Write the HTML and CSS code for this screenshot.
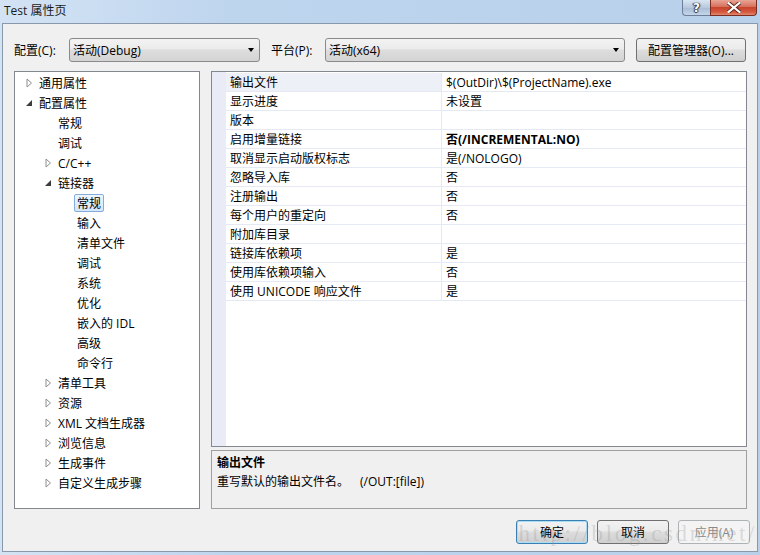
FILE: index.html
```html
<!DOCTYPE html>
<html lang="zh-CN">
<head>
<meta charset="utf-8">
<title>Test 属性页</title>
<link rel="stylesheet" href="styles.css">
</head>
<body>
<div class="window">
  <div class="titlebar">
    <span class="title">Test 属性页</span>
    <div class="caption">
      <div class="cap help">?</div>
      <div class="cap close">
        <svg width="14" height="11" viewBox="0 0 14 11"><path d="M1.5 1 L12.5 10 M12.5 1 L1.5 10" stroke="#5a2418" stroke-width="4" stroke-linecap="square"/><path d="M1.5 1 L12.5 10 M12.5 1 L1.5 10" stroke="#ffffff" stroke-width="2.2" stroke-linecap="square"/></svg>
      </div>
    </div>
  </div>
  <div class="client">
    <div class="toolbar">
      <span class="lbl l-cfg">配置(C):</span>
      <div class="combo combo-cfg"><span>活动(Debug)</span><i class="drop"></i></div>
      <span class="lbl l-plat">平台(P):</span>
      <div class="combo combo-plat"><span>活动(x64)</span><i class="drop"></i></div>
      <div class="btn mgr">配置管理器(O)...</div>
    </div>
    <div class="main">
      <div class="tree">
        <div class="node l0"><span class="tw"><svg width="7" height="10" viewBox="0 0 7 10"><path d="M1 1 L5.5 5 L1 9 Z" fill="#fff" stroke="#8e8e8e"/></svg></span><span class="lab">通用属性</span></div>
        <div class="node l0"><span class="tw"><svg width="7" height="10" viewBox="0 0 7 10"><path d="M6 2 L6 8 L0 8 Z" fill="#3c3c3c"/></svg></span><span class="lab">配置属性</span></div>
        <div class="node l1"><span class="tw"></span><span class="lab">常规</span></div>
        <div class="node l1"><span class="tw"></span><span class="lab">调试</span></div>
        <div class="node l1"><span class="tw"><svg width="7" height="10" viewBox="0 0 7 10"><path d="M1 1 L5.5 5 L1 9 Z" fill="#fff" stroke="#8e8e8e"/></svg></span><span class="lab">C/C++</span></div>
        <div class="node l1"><span class="tw"><svg width="7" height="10" viewBox="0 0 7 10"><path d="M6 2 L6 8 L0 8 Z" fill="#3c3c3c"/></svg></span><span class="lab">链接器</span></div>
        <div class="node l2"><span class="tw"></span><span class="lab sel">常规</span></div>
        <div class="node l2"><span class="tw"></span><span class="lab">输入</span></div>
        <div class="node l2"><span class="tw"></span><span class="lab">清单文件</span></div>
        <div class="node l2"><span class="tw"></span><span class="lab">调试</span></div>
        <div class="node l2"><span class="tw"></span><span class="lab">系统</span></div>
        <div class="node l2"><span class="tw"></span><span class="lab">优化</span></div>
        <div class="node l2"><span class="tw"></span><span class="lab">嵌入的 IDL</span></div>
        <div class="node l2"><span class="tw"></span><span class="lab">高级</span></div>
        <div class="node l2"><span class="tw"></span><span class="lab">命令行</span></div>
        <div class="node l1"><span class="tw"><svg width="7" height="10" viewBox="0 0 7 10"><path d="M1 1 L5.5 5 L1 9 Z" fill="#fff" stroke="#8e8e8e"/></svg></span><span class="lab">清单工具</span></div>
        <div class="node l1"><span class="tw"><svg width="7" height="10" viewBox="0 0 7 10"><path d="M1 1 L5.5 5 L1 9 Z" fill="#fff" stroke="#8e8e8e"/></svg></span><span class="lab">资源</span></div>
        <div class="node l1"><span class="tw"><svg width="7" height="10" viewBox="0 0 7 10"><path d="M1 1 L5.5 5 L1 9 Z" fill="#fff" stroke="#8e8e8e"/></svg></span><span class="lab">XML 文档生成器</span></div>
        <div class="node l1"><span class="tw"><svg width="7" height="10" viewBox="0 0 7 10"><path d="M1 1 L5.5 5 L1 9 Z" fill="#fff" stroke="#8e8e8e"/></svg></span><span class="lab">浏览信息</span></div>
        <div class="node l1"><span class="tw"><svg width="7" height="10" viewBox="0 0 7 10"><path d="M1 1 L5.5 5 L1 9 Z" fill="#fff" stroke="#8e8e8e"/></svg></span><span class="lab">生成事件</span></div>
        <div class="node l1"><span class="tw"><svg width="7" height="10" viewBox="0 0 7 10"><path d="M1 1 L5.5 5 L1 9 Z" fill="#fff" stroke="#8e8e8e"/></svg></span><span class="lab">自定义生成步骤</span></div>
      </div>
      <div class="right">
        <div class="grid">
          <div class="row first"><span class="m"></span><span class="name">输出文件</span><span class="val">$(OutDir)\$(ProjectName).exe</span></div>
          <div class="row"><span class="m"></span><span class="name">显示进度</span><span class="val">未设置</span></div>
          <div class="row"><span class="m"></span><span class="name">版本</span><span class="val"></span></div>
          <div class="row"><span class="m"></span><span class="name">启用增量链接</span><span class="val bold">否(/INCREMENTAL:NO)</span></div>
          <div class="row"><span class="m"></span><span class="name">取消显示启动版权标志</span><span class="val">是(/NOLOGO)</span></div>
          <div class="row"><span class="m"></span><span class="name">忽略导入库</span><span class="val">否</span></div>
          <div class="row"><span class="m"></span><span class="name">注册输出</span><span class="val">否</span></div>
          <div class="row"><span class="m"></span><span class="name">每个用户的重定向</span><span class="val">否</span></div>
          <div class="row"><span class="m"></span><span class="name">附加库目录</span><span class="val"></span></div>
          <div class="row"><span class="m"></span><span class="name">链接库依赖项</span><span class="val">是</span></div>
          <div class="row"><span class="m"></span><span class="name">使用库依赖项输入</span><span class="val">否</span></div>
          <div class="row"><span class="m"></span><span class="name">使用 UNICODE 响应文件</span><span class="val">是</span></div>
        </div>
        <div class="desc">
          <div class="desc-title">输出文件</div>
          <div class="desc-text"><span>重写默认的输出文件名。</span><span class="sw">(/OUT:[file])</span></div>
        </div>
      </div>
    </div>
    <div class="buttons">
      <div class="btn ok">确定</div>
      <div class="btn">取消</div>
      <div class="btn disabled">应用(A)</div>
    </div>
    <div class="watermark">http://blog.csdn.net/</div>
  </div>
</div>
</body>
</html>
```
FILE: styles.css
```css
* { box-sizing: border-box; }
html, body { margin: 0; padding: 0; }
body {
  width: 760px;
  height: 555px;
  overflow: hidden;
  font-family: "Open Sans", "Noto Sans CJK SC", sans-serif;
  font-size: 12px;
  color: #000;
}
.window {
  width: 760px;
  height: 555px;
  display: flex;
  flex-direction: column;
  background: linear-gradient(90deg, #d3e3f4 0%, #bed5ee 30%, #b8d0ea 100%);
}
.titlebar {
  height: 23px;
  display: flex;
  align-items: flex-start;
  flex: none;
}
.title {
  margin: 2px 0 0 4px;
  line-height: 17px;
  font-size: 12px;
  color: #1a1a1a;
}
.caption {
  margin-left: auto;
  margin-right: 3px;
  display: flex;
}
.cap {
  height: 16px;
  display: flex;
  align-items: center;
  justify-content: center;
  border: 1px solid #6c7f98;
  border-top: none;
}
.help {
  width: 28px;
  border-radius: 0 0 0 4px;
  border-right: none;
  background: linear-gradient(#d9e5f2, #b8c9dd 50%, #a7bbd4 51%, #c5d6ea);
  color: #fff;
  font-family: "DejaVu Sans", sans-serif;
  font-weight: bold;
  font-size: 12px;
  text-shadow: 0 0 1px #334, 1px 0 1px #334, -1px 0 1px #334, 0 1px 1px #334;
}
.close {
  width: 47px;
  border-radius: 0 0 4px 0;
  border-color: #7b2d22;
  background: linear-gradient(#e8a595, #d6705c 45%, #c7442c 50%, #d5593f 80%, #e08a70);
}
.client {
  flex: 1;
  margin: 0 2px 3px 2px;
  border: 1px solid #8a98ab;
  background: #f0f0f0;
  padding: 0 0 0 11px;
  display: flex;
  flex-direction: column;
  position: relative;
}
.toolbar {
  margin-top: 14px;
  height: 24px;
  display: flex;
  align-items: center;
}
.lbl { line-height: 24px; padding-top: 1px; white-space: nowrap; }
.l-cfg { width: 55px; }
.l-plat { width: 54px; margin-left: 11px; }
.combo {
  height: 24px;
  border: 1px solid #8a8a8a;
  border-radius: 3px;
  background: linear-gradient(#f3f3f3, #ebebeb 45%, #dddddd 50%, #d4d4d4);
  display: flex;
  align-items: center;
  padding-left: 3px;
  position: relative;
}
.combo span { line-height: 20px; padding-top: 1px; }
.combo-cfg { width: 191px; }
.combo-plat { width: 300px; }
.drop {
  margin-left: auto;
  margin-right: 5px;
  width: 0;
  height: 0;
  border-left: 3.5px solid transparent;
  border-right: 3.5px solid transparent;
  border-top: 4px solid #000;
}
.btn {
  height: 24px;
  border: 1px solid #707070;
  border-radius: 3px;
  background: linear-gradient(#f2f2f2, #ebebeb 45%, #dddddd 50%, #cfcfcf);
  display: flex;
  align-items: center;
  justify-content: center;
  line-height: 20px;
  padding-top: 1px;
  width: 72px;
}
.mgr { width: 110px; margin-left: 11px; }
.main {
  margin-top: 9px;
  height: 438px;
  display: flex;
}
.tree {
  width: 186px;
  height: 438px;
  border: 1px solid #828790;
  background: #fff;
  padding-top: 1px;
}
.node {
  height: 20px;
  display: flex;
  align-items: center;
  white-space: nowrap;
}
.l0 { padding-left: 11px; }
.l1 { padding-left: 30px; }
.l2 { padding-left: 49px; }
.tw {
  width: 13px;
  height: 20px;
  display: flex;
  align-items: center;
}
.lab {
  line-height: 16px;
  padding: 1px 2px 0 2px;
  height: 18px;
  border: 1px solid transparent;
  margin-left: -3px;
  color: #000;
}
.lab.sel {
  background: linear-gradient(#eef5fd, #d5e6fb);
  border-color: #84acdd;
  border-radius: 2px;
}
.right {
  margin-left: 11px;
  width: 536px;
  display: flex;
  flex-direction: column;
}
.grid {
  height: 376px;
  border: 1px solid #828790;
  padding-top: 1px;
  background: linear-gradient(90deg, #e9ecf7 14px, #ffffff 14px);
}
.row {
  display: grid;
  grid-template-columns: 14px 215px 1fr;
  height: 19px;
}
.row .name, .row .val {
  line-height: 16px;
  padding-top: 2px;
  border-bottom: 1px solid #e4e9f4;
  white-space: nowrap;
  overflow: hidden;
}
.row .name { padding-left: 4px; }
.row .val { padding-left: 4px; border-left: 1px solid #e4e9f4; }
.row.first .name { background: #eef0f7; }
.val.bold { font-weight: bold; }
.desc {
  margin-top: 3px;
  height: 59px;
  border: 1px solid #a0a0a0;
  background: #f0f0f0;
  padding: 3px 0 0 5px;
}
.desc-title { font-weight: bold; line-height: 18px; }
.desc-text { line-height: 19px; white-space: nowrap; }
.desc-text .sw { margin-left: 11px; }
.buttons {
  margin-top: 11px;
  display: flex;
  justify-content: flex-end;
  gap: 9px;
  padding-right: 7px;
}
.btn.ok {
  border-color: #3c7fb1;
  box-shadow: inset 0 0 0 1px #a9dcf6;
}
.btn.disabled {
  border-color: #adb2b5;
  background: #f4f4f4;
  color: #8a8a8a;
}
.watermark {
  position: absolute;
  right: 0;
  bottom: 5px;
  font-family: "Liberation Serif", serif;
  font-size: 23px;
  letter-spacing: 2.6px;
  color: rgba(150, 150, 150, 0.3);
  line-height: 24px;
  pointer-events: none;
  white-space: nowrap;
}
```
